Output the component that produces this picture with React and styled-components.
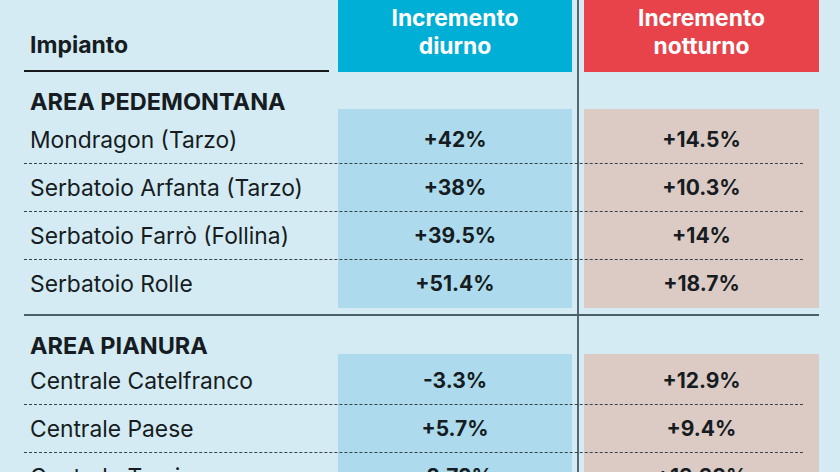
import React from 'react'
import styled, { createGlobalStyle } from 'styled-components'

const GlobalStyle = createGlobalStyle`
  html, body {
    margin: 0;
    padding: 0;
    height: 100%;
    overflow: hidden;
    background: #d4ebf3;
  }
  body {
    font-family: Inter, "Noto Sans", "Liberation Sans", sans-serif;
    color: #161c21;
  }
`

const areas = [
  {
    name: 'AREA PEDEMONTANA',
    headHeight: 44,
    lift: 7,
    rows: [
      ['Mondragon (Tarzo)', '+42%', '+14.5%'],
      ['Serbatoio Arfanta (Tarzo)', '+38%', '+10.3%'],
      ['Serbatoio Farrò (Follina)', '+39.5%', '+14%'],
      ['Serbatoio Rolle', '+51.4%', '+18.7%'],
    ],
  },
  {
    name: 'AREA PIANURA',
    headHeight: 41,
    lift: 3,
    rows: [
      ['Centrale Catelfranco', '-3.3%', '+12.9%'],
      ['Centrale Paese', '+5.7%', '+9.4%'],
      ['Centrale Treviso', '-2.72%', '+13.38%'],
    ],
  },
]

const COLS = '314px 234px 12px 235px'

const Page = styled.main`
  padding-left: 24px;
`

const Table = styled.div`
  width: 795px;
  min-height: 472px;
  background: linear-gradient(#566771, #566771) no-repeat 553px 0 / 2px 100%;
`

const Header = styled.div`
  display: grid;
  grid-template-columns: ${COLS};
  height: 72px;
`

const LabelHead = styled.div`
  display: flex;
  align-items: flex-end;
  margin-right: 9px;
  padding: 0 0 11px 6px;
  border-bottom: 2px solid #15191c;
  font-size: 23px;
  font-weight: 700;
  line-height: 28px;
`

const ColHead = styled.div`
  grid-column: ${p => p.$col};
  background: ${p => p.$tone};
  color: #fff;
  text-align: center;
  font-size: 22.8px;
  font-weight: 700;
  line-height: 28px;
  padding-top: 4px;
`

const Section = styled.section`
  display: grid;
  grid-template-columns: ${COLS};
  padding-bottom: ${p => (p.$last ? 0 : 6)}px;
  border-bottom: ${p => (p.$last ? 'none' : '2px solid #4b5d67')};
`

const Fill = styled.div`
  grid-column: ${p => p.$col};
  grid-row: 2 / span ${p => p.$span};
  margin-top: -${p => p.$lift}px;
  background: ${p => p.$tone};
`

const AreaName = styled.h3`
  grid-column: 1;
  grid-row: 1;
  margin: 0;
  height: ${p => p.$h}px;
  box-sizing: border-box;
  padding: 16px 0 0 6px;
  font-size: 23.5px;
  font-weight: 700;
  line-height: 28px;
  white-space: nowrap;
`

const Row = styled.div`
  grid-column: 1 / -1;
  grid-row: ${p => p.$row};
  display: grid;
  grid-template-columns: ${COLS};
  align-items: center;
  height: 48px;
  position: relative;

  &::after {
    content: '';
    display: ${p => (p.$last ? 'none' : 'block')};
    position: absolute;
    left: 0;
    right: 16px;
    bottom: 0;
    border-bottom: 1px dashed #39434a;
  }
`

const Place = styled.span`
  padding-left: 6px;
  font-size: 22.8px;
  line-height: 28px;
  white-space: nowrap;
`

const Value = styled.span`
  grid-column: ${p => p.$col};
  text-align: center;
  font-size: 21px;
  font-weight: 700;
  line-height: 28px;
`

const BLUE = '#addbed'
const ROSE = '#dccbc5'

const App = () => {
  return (
    <Page>
      <GlobalStyle />
      <Table>
        <Header>
          <LabelHead>Impianto</LabelHead>
          <ColHead $col={2} $tone="#00afd6">Incremento<br />diurno</ColHead>
          <ColHead $col={4} $tone="#e8434a">Incremento<br />notturno</ColHead>
        </Header>

        {areas.map((area, i) => (
          <Section key={area.name} $last={i === areas.length - 1}>
            <Fill $col={2} $span={area.rows.length} $lift={area.lift} $tone={BLUE} />
            <Fill $col={4} $span={area.rows.length} $lift={area.lift} $tone={ROSE} />
            <AreaName $h={area.headHeight}>{area.name}</AreaName>
            {area.rows.map(([place, day, night], j) => (
              <Row key={place} $row={j + 2} $last={i === 0 && j === area.rows.length - 1}>
                <Place>{place}</Place>
                <Value $col={2}>{day}</Value>
                <Value $col={4}>{night}</Value>
              </Row>
            ))}
          </Section>
        ))}
      </Table>
    </Page>
  )
}

export default App
